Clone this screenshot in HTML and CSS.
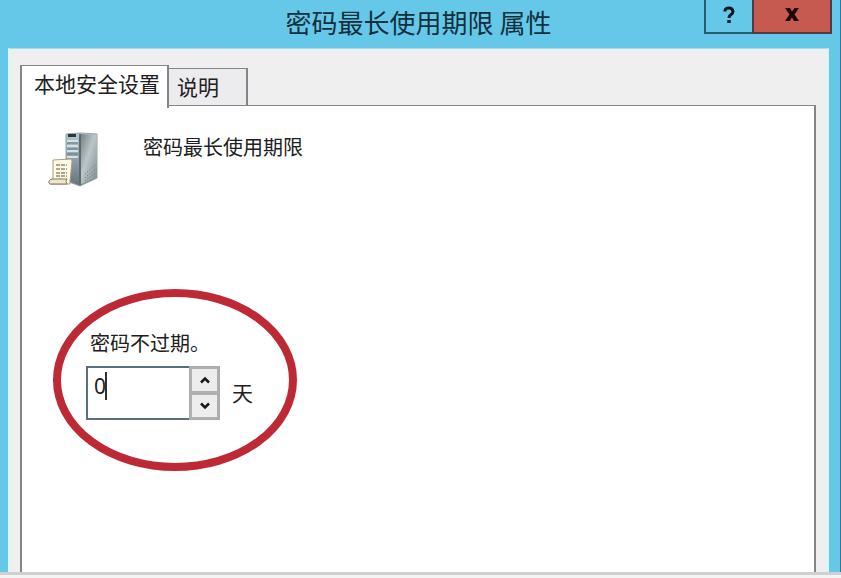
FILE: index.html
```html
<!DOCTYPE html>
<html lang="zh-CN">
<head>
<meta charset="utf-8">
<title>密码最长使用期限 属性</title>
<link rel="stylesheet" href="styles.css">
</head>
<body>
<main class="window">
  <header class="titlebar">
    <h1 class="title">密码最长使用期限 属性</h1>
    <div class="window-buttons">
      <button class="help" type="button" aria-label="帮助">
        <svg width="14" height="18" viewBox="0 0 14 18" aria-hidden="true"><path d="M3 5.500V4.500Q3.500 2 7 2T11 5.500Q11 7.500 8.500 9Q7 10 7 12" fill="none" stroke="#081820" stroke-width="3"/><path d="M5.300 14h3.400v3H5.300z" fill="#081820"/></svg>
      </button>
      <button class="close" type="button" aria-label="关闭">
        <svg width="16" height="14" viewBox="0 0 16 14" aria-hidden="true"><path d="M1 0h5l2 3.500L10.500 0H15l-4.500 6.500L15 13h-5L8 9.500 5.500 13H1l4.500-6.500z" fill="#1c0808"/></svg>
      </button>
    </div>
  </header>
  <div class="dialog">
    <div class="tabs" role="tablist">
      <button class="tab active" type="button" role="tab" aria-selected="true">本地安全设置</button>
      <button class="tab" type="button" role="tab" aria-selected="false">说明</button>
    </div>
    <section class="panel" role="tabpanel">
      <div class="policy">
        <svg class="server" width="52" height="56" viewBox="0 0 52 56" aria-hidden="true">
          <defs>
            <linearGradient id="side" x1="0" y1="0" x2="1" y2="1"><stop offset="0" stop-color="#727e82"/><stop offset=".45" stop-color="#bcc6c8"/><stop offset="1" stop-color="#7c898d"/></linearGradient>
            <linearGradient id="front" x1="0" y1="0" x2="0" y2="1"><stop offset="0" stop-color="#b8c8d0"/><stop offset="1" stop-color="#66757b"/></linearGradient>
          </defs>
          <path d="M18 2l14-1 17 1v44L32 54 18 49z" fill="url(#front)" stroke="#98a4a8"/>
          <path d="M32 2l17 1v42L32 53z" fill="url(#side)"/>
          <path d="M32 2v51" stroke="#5d6b70" stroke-width="2"/>
          <path d="M20 3.500h8" stroke="#29373d" stroke-width="3"/>
          <path d="M19 9h11M19 14h11M19 19h11M19 25h11" stroke="#d5e0e6" stroke-width="2"/>
          <path d="M19 11h11M19 17h11M19 22h11" stroke="#617683" stroke-width="1"/>
          <path d="M37 42l10-9M37 46l10-9M37 49l10-8" stroke="#687579" stroke-dasharray="1 2"/>
          <path d="M5 28l18-1 1 2-2 20v3H2q-2-4 3-4z" fill="#fffbe9" stroke="#a99b80"/>
          <path d="M1 49q1-2 4-2h14q-2 2 0 5H2q-2-1-1-3z" fill="#f0e5ce" stroke="#85755f"/>
          <path d="M8 33h11M8 37h11M8 41h11M8 44h11" stroke="#98866b" stroke-width="1.500" stroke-dasharray="4 1"/>
        </svg>
        <h2 class="policy-name">密码最长使用期限</h2>
      </div>
      <div class="setting">
        <label class="caption" for="days">密码不过期。</label>
        <div class="field">
          <div class="spinner">
            <input class="days" id="days" type="text" inputmode="numeric" value="0">
            <span class="caret"></span>
            <div class="steps">
              <button class="step" type="button" aria-label="增加"><svg width="12" height="8" viewBox="0 0 12 8" aria-hidden="true"><path d="M2 6.500l4-4 4 4" fill="none" stroke="#181818" stroke-width="2.500"/></svg></button>
              <button class="step" type="button" aria-label="减少"><svg width="12" height="8" viewBox="0 0 12 8" aria-hidden="true"><path d="M2 1.500l4 4 4-4" fill="none" stroke="#181818" stroke-width="2.500"/></svg></button>
            </div>
          </div>
          <span class="unit">天</span>
        </div>
        <svg class="ring" width="248" height="184" viewBox="0 0 248 184" aria-hidden="true"><ellipse cx="124" cy="92" rx="118" ry="87" fill="none" stroke="#bd2a36" stroke-width="8"/></svg>
      </div>
    </section>
  </div>
</main>
<footer class="strip"></footer>
</body>
</html>
```
FILE: styles.css
```css
* {
  box-sizing: border-box;
}

body {
  display: flex;
  flex-direction: column;
  min-height: 100vh;
  margin: 0;
  background: #f4f4f5;
  color: #202020;
  font-family: "Noto Sans", "Noto Sans CJK SC", sans-serif;
  font-size: 21px;
  line-height: 28px;
}

button,
input {
  margin: 0;
  padding: 0;
  border-radius: 0;
  color: inherit;
  font: inherit;
}

.window {
  display: flex;
  flex: 1;
  flex-direction: column;
  padding: 0 11px 0 8px;
  border-right: 1px solid #35788e;
  background: #65c8e8;
}

.titlebar {
  position: relative;
  display: flex;
  align-items: flex-start;
  justify-content: center;
  height: 48px;
}

.title {
  margin: 0;
  padding-top: 6px;
  color: #10303e;
  font-family: "Noto Sans CJK SC", sans-serif;
  font-size: 26px;
  font-weight: 400;
  line-height: 32px;
}

.window-buttons {
  position: absolute;
  top: 0;
  right: -3px;
  display: flex;
  height: 34px;
}

.help,
.close {
  display: flex;
  align-items: center;
  justify-content: center;
  width: 50px;
  padding-bottom: 2px;
  border: 2px solid #285d70;
  border-top: 0;
  background: #65c8e8;
}

.close {
  width: 80px;
  margin-left: -2px;
  border-color: #513b44;
  background: #c75a50;
}

.dialog {
  display: flex;
  flex: 1;
  flex-direction: column;
  padding: 16px 11px 0 10px;
  border: 2px solid #d9f6fa;
  border-top: 1px solid #a9dce8;
  border-bottom: 0;
  background: #efeff0;
}

.tabs {
  display: flex;
  align-items: flex-end;
  height: 40px;
}

.tab {
  position: relative;
  width: 79px;
  height: 37px;
  padding: 0 0 0 8px;
  border: 1px solid #858587;
  border-width: 1px 2px 0 0;
  background: #ececee;
  text-align: left;
}

.tab.active {
  z-index: 1;
  width: 149px;
  height: 43px;
  margin-bottom: -3px;
  padding: 0 0 6px 12px;
  border-width: 1px 2px 0 2px;
  background: #fff;
}

.panel {
  flex: 1;
  padding: 26px 26px 0;
  border: 2px solid #858587;
  border-top-width: 1px;
  border-bottom: 0;
  background: #fff;
}

.policy {
  display: flex;
  gap: 43px;
  height: 56px;
}

.policy-name {
  margin: 0;
  padding-top: 2px;
  font-size: 20px;
  font-weight: 400;
}

.setting {
  position: relative;
  width: 248px;
  margin: 100px 0 0 3px;
  padding: 42px 0 56px 35px;
}

.caption {
  display: block;
  padding-left: 4px;
  font-size: 20px;
}

.field {
  display: flex;
  align-items: center;
  gap: 12px;
  margin-top: 8px;
}

.spinner {
  position: relative;
  display: flex;
  width: 134px;
  height: 54px;
}

.days {
  flex: 1;
  min-width: 0;
  padding: 0 0 14px 6px;
  border: 2px solid #56727e;
  border-right: 0;
  background: #fff;
  outline: 0;
}

.caret {
  position: absolute;
  top: 6px;
  left: 19px;
  width: 2px;
  height: 28px;
  background: #303030;
}

.steps {
  display: flex;
  flex-direction: column;
  width: 31px;
  border: 1px solid #aaaaac;
}

.step {
  display: flex;
  flex: 1;
  align-items: center;
  justify-content: center;
  border: 2px solid #b0b0b2;
  background: #ededee;
}

.ring {
  position: absolute;
  top: 0;
  left: 0;
  pointer-events: none;
}

.strip {
  height: 6px;
  border-top: 3px solid #cfcfd4;
}
```
